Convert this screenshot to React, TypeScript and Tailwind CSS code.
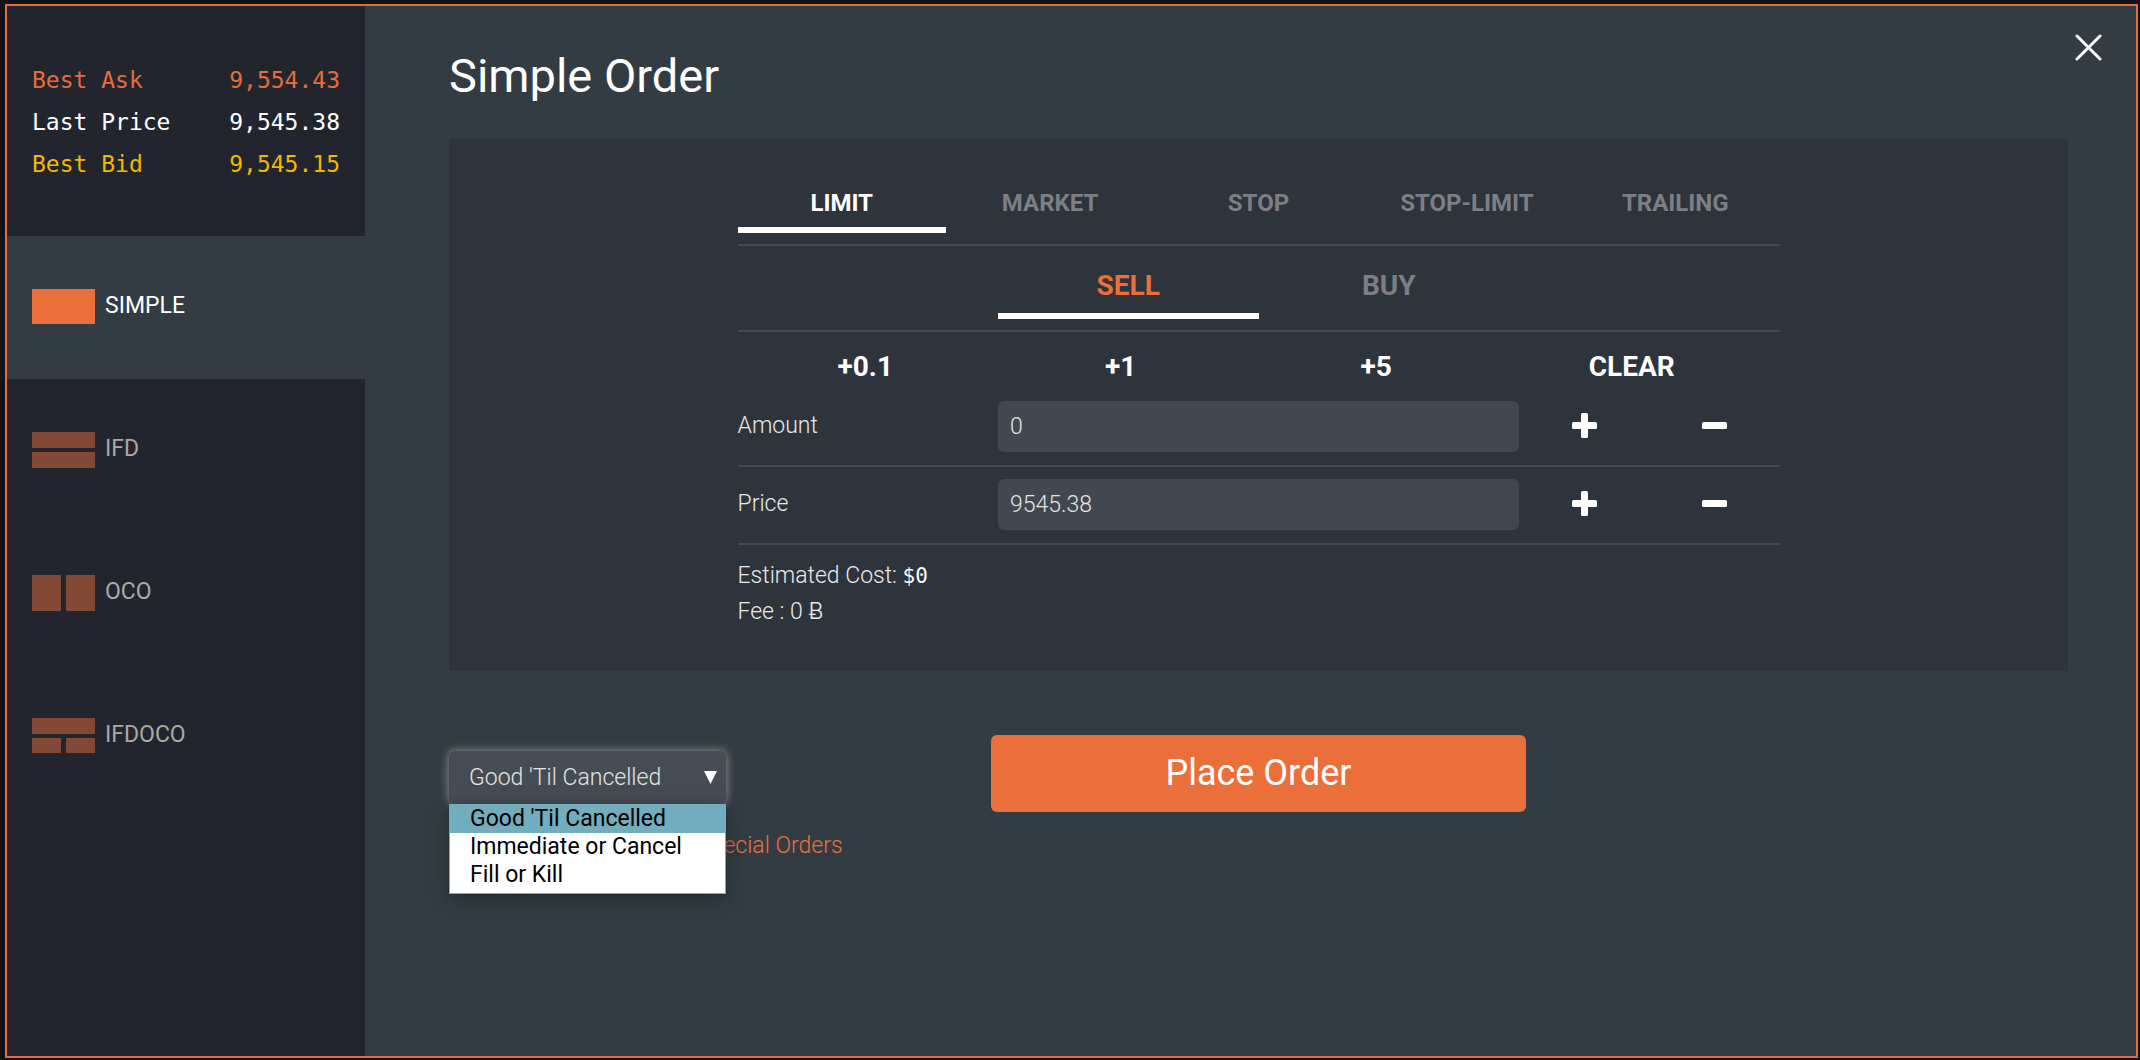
import { useState } from 'react';
import clsx from 'clsx';

const prices = [
  { label: 'Best Ask', value: '9,554.43', color: 'text-[#e56d3a]' },
  { label: 'Last Price', value: '9,545.38', color: 'text-white' },
  { label: 'Best Bid', value: '9,545.15', color: 'text-[#f0b800]' },
];

// each icon is a set of blocks on a 63x36 grid: x, y, width, height
const orderKinds = [
  { name: 'SIMPLE', blocks: [[0, 0, 63, 35]] },
  { name: 'IFD', blocks: [[0, 0, 63, 16], [0, 20, 63, 16]] },
  { name: 'OCO', blocks: [[0, 0, 29, 36], [34, 0, 29, 36]] },
  { name: 'IFDOCO', blocks: [[0, 0, 63, 16], [0, 20, 29, 15], [34, 20, 29, 15]] },
];

const orderTypes = ['LIMIT', 'MARKET', 'STOP', 'STOP-LIMIT', 'TRAILING'];
const sides = ['SELL', 'BUY'];
const presets = ['+0.1', '+1', '+5', 'CLEAR'];
const timeInForce = ["Good 'Til Cancelled", 'Immediate or Cancel', 'Fill or Kill'];

const PlusIcon = () => (
  <svg width="25" height="25" viewBox="0 0 25 25" fill="white" aria-hidden="true">
    <rect x="0" y="9" width="25" height="7" rx="1.5" />
    <rect x="9" y="0" width="7" height="25" rx="1.5" />
  </svg>
);

const MinusIcon = () => (
  <svg width="25" height="25" viewBox="0 0 25 25" fill="white" aria-hidden="true">
    <rect x="0" y="9" width="25" height="7" rx="1.5" />
  </svg>
);

const Sidebar = ({ kind, onSelect }: { kind: string; onSelect: (name: string) => void }) => (
  <aside className="w-[358px] shrink-0 bg-[#22252d]">
    <dl className="h-[230px] px-[25px] pt-[53px] font-['DejaVu_Sans_Mono',monospace] text-[23px] leading-[42px]">
      {prices.map((p) => (
        <div key={p.label} className={clsx('flex justify-between', p.color)}>
          <dt>{p.label}</dt>
          <dd>{p.value}</dd>
        </div>
      ))}
    </dl>
    <nav>
      {orderKinds.map((k) => {
        const active = k.name === kind;
        return (
          <button
            key={k.name}
            type="button"
            onClick={() => onSelect(k.name)}
            className={clsx(
              'flex h-[143px] w-full items-center gap-[10px] px-[25px] pb-[2px] text-left text-[23px]',
              active ? 'bg-[#323c42] text-white' : 'text-[#a9a9a8]'
            )}
          >
            <svg
              width="63"
              height="36"
              viewBox="0 0 63 36"
              className={active ? 'fill-[#eb6f3a]' : 'fill-[#824936]'}
              aria-hidden="true"
            >
              {k.blocks.map(([x, y, w, h]) => (
                <rect key={`${x}-${y}`} x={x} y={y} width={w} height={h} />
              ))}
            </svg>
            {k.name}
          </button>
        );
      })}
    </nav>
  </aside>
);

type FieldProps = {
  id: string;
  label: string;
  value: string;
  onChange: (value: string) => void;
};

const NumberField = ({ id, label, value, onChange }: FieldProps) => (
  <div className="grid grid-cols-[2fr_4fr_1fr_1fr] items-center border-b-2 border-[#434950] pt-3 pb-[13px]">
    <label htmlFor={id}>{label}</label>
    <input
      id={id}
      type="text"
      value={value}
      onChange={(e) => onChange(e.target.value)}
      className="h-[51px] w-full rounded-md bg-[#42484f] px-3 font-light text-[#e3e4e4] outline-none"
    />
    <button type="button" aria-label={`Increase ${label}`} className="flex justify-center pb-[2px]">
      <PlusIcon />
    </button>
    <button type="button" aria-label={`Decrease ${label}`} className="flex justify-center pb-[2px]">
      <MinusIcon />
    </button>
  </div>
);

const OrderForm = () => {
  const [type, setType] = useState('LIMIT');
  const [side, setSide] = useState('SELL');
  const [amount, setAmount] = useState('0');
  const [price, setPrice] = useState('9545.38');

  return (
    <section className="bg-[#2e343b] px-10 pt-[46px] pb-[42px]">
      <div className="mx-auto max-w-[1042px] text-[23px] font-light text-[#e8e9e9]">
        <div className="grid grid-cols-5 border-b-2 border-[#434950] pb-[11px] text-[24px] font-bold">
          {orderTypes.map((t) => (
            <button
              key={t}
              type="button"
              onClick={() => setType(t)}
              className={clsx(
                'border-b-6 pb-[6px] leading-[36px]',
                t === type ? 'border-white text-white' : 'border-transparent text-[#7c7f85]'
              )}
            >
              {t}
            </button>
          ))}
        </div>

        <div className="flex justify-center border-b-2 border-[#434950] pt-5 pb-[11px] text-[28px] font-bold">
          {sides.map((s) => (
            <button
              key={s}
              type="button"
              onClick={() => setSide(s)}
              className={clsx(
                'w-1/4 border-b-6 pb-[7px] leading-[40px]',
                s === side ? 'border-white text-[#eb6f3a]' : 'border-transparent text-[#7c7f85]'
              )}
            >
              {s}
            </button>
          ))}
        </div>

        <div className="grid grid-cols-4 pt-[15px] pr-5 pb-[2px] text-[28px] leading-[40px] font-bold text-white">
          {presets.map((p) => (
            <button key={p} type="button">{p}</button>
          ))}
        </div>

        <NumberField id="amount" label="Amount" value={amount} onChange={setAmount} />
        <NumberField id="price" label="Price" value={price} onChange={setPrice} />

        <div className="pt-[13px] leading-[35px]">
          <p>
            Estimated Cost:{' '}
            <span className="font-['DejaVu_Sans_Mono',monospace] text-[21px] font-normal text-white">$0</span>
          </p>
          <p>
            Fee : 0 <span className="font-['Inter',sans-serif]">Ƀ</span>
          </p>
        </div>
      </div>
    </section>
  );
};

const TimeInForceSelect = () => {
  const [value, setValue] = useState(timeInForce[0]);
  const [open, setOpen] = useState(true);

  return (
    <div className="relative w-[277px]">
      <select
        aria-label="Time in force"
        value={value}
        onChange={(e) => setValue(e.target.value)}
        className="block h-[53px] w-full appearance-none rounded-md bg-[#464c54] pt-[2px] pr-10 pl-5 text-[23px] font-light text-[#e3e4e4] shadow-[0_0_8px_1px_#83868c] outline-none"
      >
        {timeInForce.map((t) => (
          <option key={t}>{t}</option>
        ))}
      </select>
      <svg width="13" height="13" viewBox="0 0 13 13" className="pointer-events-none absolute top-5 right-[9px] fill-white" aria-hidden="true">
        <path d="M0 0h13L6.5 13z" />
      </svg>
      {open && (
        <ul className="absolute top-full left-0 z-10 w-full border border-[#72adbd] bg-white pb-1 text-[23px] leading-[28px] text-black shadow-[0_4px_16px_rgba(34,37,45,0.8)]">
          {timeInForce.map((t) => (
            <li
              key={t}
              onClick={() => {
                setValue(t);
                setOpen(false);
              }}
              className={clsx('cursor-default pl-5', t === value && 'bg-[#72adbd]')}
            >
              {t}
            </li>
          ))}
        </ul>
      )}
    </div>
  );
};

export default function App() {
  const [kind, setKind] = useState('SIMPLE');

  return (
    <div className="flex min-h-screen bg-[#121318] pt-1 pr-[2px] pb-[2px] pl-[5px] font-['Roboto',sans-serif]">
      <div className="flex flex-1 border-2 border-[#e56d3a] bg-[#323c42]">
        <Sidebar kind={kind} onSelect={setKind} />

        <main className="relative flex-1 pt-[42px] pr-[68px] pl-[84px]">
          <button type="button" aria-label="Close" className="absolute top-7 right-[34px]">
            <svg width="27" height="27" viewBox="0 0 27 27" fill="none" stroke="white" strokeWidth="3" strokeLinecap="round" aria-hidden="true">
              <path d="M2 2l23 23M25 2L2 25" />
            </svg>
          </button>

          <h1 className="mb-[35px] text-[47px] leading-[56px] text-white">Simple Order</h1>

          <OrderForm />

          <div className="mt-16 grid grid-cols-[1fr_33%_1fr] items-start">
            <div className="pt-4">
              <TimeInForceSelect />
              <a href="#special-orders" className="mt-6 ml-[248px] block text-[23px] leading-[36px] font-light whitespace-nowrap text-[#eb6f3a]">
                Special Orders
              </a>
            </div>
            <button type="button" className="h-[77px] rounded-md bg-[#eb6f3a] pb-[2px] text-[36px] text-white">
              Place Order
            </button>
          </div>
        </main>
      </div>
    </div>
  );
}
